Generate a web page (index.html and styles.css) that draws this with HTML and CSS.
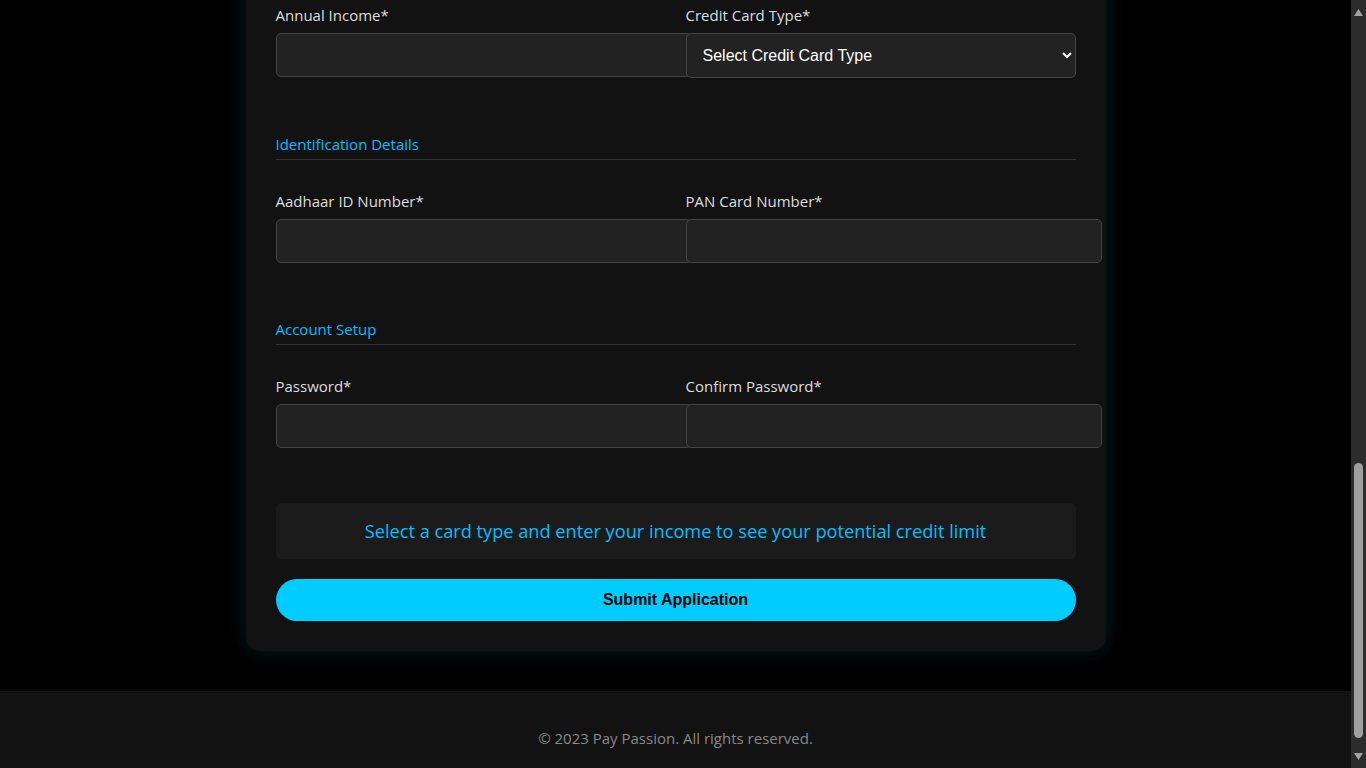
FILE: index.html
```html
<!DOCTYPE html>
<html lang="en">
<head>
<meta charset="utf-8">
<title>Pay Passion - Credit Card Application</title>
<link rel="stylesheet" href="styles.css">
</head>
<body>
<div class="page">
  <main class="main">
    <form class="card">
      <section class="section section-first">
        <div class="grid">
          <div class="field"><label>Annual Income*</label><input type="text"></div>
          <div class="field"><label>Credit Card Type*</label>
            <select>
              <option>Select Credit Card Type</option>
              <option>Classic</option>
              <option>Gold</option>
              <option>Platinum</option>
            </select>
          </div>
        </div>
      </section>

      <section class="section">
        <h3 class="section-title">Identification Details</h3>
        <div class="grid">
          <div class="field"><label>Aadhaar ID Number*</label><input type="text"></div>
          <div class="field"><label>PAN Card Number*</label><input type="text"></div>
        </div>
      </section>

      <section class="section">
        <h3 class="section-title">Account Setup</h3>
        <div class="grid">
          <div class="field"><label>Password*</label><input type="password"></div>
          <div class="field"><label>Confirm Password*</label><input type="password"></div>
        </div>
      </section>

      <div class="limit-info">Select a card type and enter your income to see your potential credit limit</div>
      <button type="button" class="submit">Submit Application</button>
    </form>
  </main>
  <footer class="footer">© 2023 Pay Passion. All rights reserved.</footer>
</div>
<div class="scrollbar" aria-hidden="true">
  <div class="sb-btn sb-up"><svg width="9" height="7" viewBox="0 0 9 7"><polygon points="4.5,0 9,7 0,7" fill="#a3a3a3"/></svg></div>
  <div class="sb-track"><div class="sb-thumb"></div></div>
  <div class="sb-btn sb-down"><svg width="9" height="7" viewBox="0 0 9 7"><polygon points="0,0 9,0 4.5,7" fill="#a3a3a3"/></svg></div>
</div>
</body>
</html>
```
FILE: styles.css
```css
html {
  color-scheme: dark;
}
body {
  margin: 0;
  height: 768px;
  overflow: hidden;
  display: flex;
  background: #000;
  color: #ddd;
  font-family: "Open Sans", "Noto Sans", sans-serif;
}
.page {
  flex: 1;
  min-width: 0;
  display: flex;
  flex-direction: column;
}
.main {
  flex: 1;
  padding-bottom: 40px;
}
.card {
  width: 800px;
  margin: -30px auto 0;
  padding: 35px 30px 30px;
  background: #121212;
  border-radius: 15px;
  box-shadow: 0 0 18px rgba(0, 255, 255, 0.12);
}
.section {
  margin-top: 36px;
}
.section-first {
  margin-top: 0;
}
.section-title {
  margin: 0 0 31px;
  padding-bottom: 5px;
  border-bottom: 1px solid #333;
  color: #00bfff;
  font-size: 15px;
  font-weight: 400;
  line-height: 20px;
}
.grid {
  display: grid;
  grid-template-columns: 1fr 1fr;
  column-gap: 20px;
}
.field {
  margin-bottom: 20px;
}
.field label {
  display: block;
  margin-bottom: 8px;
  font-size: 15px;
  line-height: 20px;
  color: #ddd;
}
.field input {
  display: block;
  width: 100%;
  height: 18px;
  padding: 12px;
  border: 1px solid #444;
  border-radius: 5px;
  background: #222;
  color: #fff;
  font-size: 16px;
  line-height: 18px;
  font-family: "Liberation Sans", Arial, sans-serif;
}
.field select {
  display: block;
  width: 100%;
  height: 45px;
  padding: 12px;
  border: 1px solid #444;
  border-radius: 5px;
  background: #222;
  color: #fff;
  font-size: 16px;
  font-family: "Liberation Sans", Arial, sans-serif;
}
.limit-info {
  margin-top: 35px;
  padding: 16px;
  border-radius: 5px;
  background: #1b1b1b;
  color: #00bfff;
  text-align: center;
  font-size: 18.2px;
  line-height: 24px;
}
.submit {
  display: block;
  width: 100%;
  margin-top: 20px;
  padding: 12px;
  border: none;
  border-radius: 21px;
  background: #00ccff;
  color: #000;
  font-family: "Liberation Sans", Arial, sans-serif;
  font-size: 16px;
  font-weight: 700;
  line-height: 18px;
  cursor: pointer;
}
.footer {
  background: #121212;
  color: #888;
  text-align: center;
  font-size: 15px;
  line-height: 22px;
  padding: 36px 0 19px;
}
.scrollbar {
  width: 15px;
  height: 768px;
  flex: none;
  display: flex;
  flex-direction: column;
  background: #2c2c2c;
}
.sb-btn {
  height: 16px;
  display: flex;
  justify-content: center;
}
.sb-btn svg {
  display: block;
}
.sb-up {
  align-items: flex-end;
}
.sb-down {
  align-items: flex-start;
  padding-top: 1px;
  height: 15px;
}
.sb-track {
  flex: 1;
  display: flex;
  flex-direction: column;
  justify-content: flex-end;
  padding: 0 3px 14px;
}
.sb-thumb {
  height: 275px;
  border-radius: 5px;
  background: #9f9f9f;
}
```
